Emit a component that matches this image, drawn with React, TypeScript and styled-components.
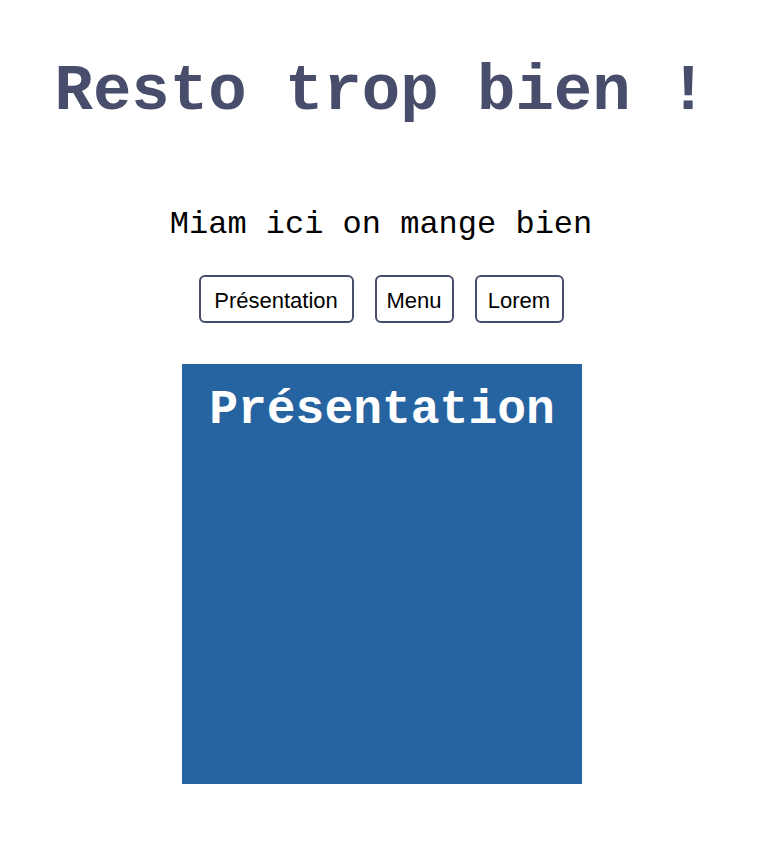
import React from 'react'
import styled, { createGlobalStyle } from 'styled-components'

//Global
const GlobalStyle = createGlobalStyle`
  body {
    margin: 0;
    background: #ffffff;
    font-family: "Liberation Mono", "Courier New", monospace;
  }
`

//Styled Components
const Page = styled.div`
  display: flex;
  flex-direction: column;
  align-items: center;
  padding: 56px 6px 0 0;
`

const Title = styled.h1`
  margin: 0;
  font-family: "Liberation Mono", "Courier New", monospace;
  font-size: 64px;
  line-height: 72px;
  font-weight: 700;
  color: #474d6b;
`

const Tagline = styled.p`
  margin: 77px 0 0;
  font-size: 32px;
  line-height: 40px;
  color: #000;
`

const Nav = styled.nav`
  display: flex;
  gap: 21px;
  margin-top: 30px;
`

const NavButton = styled.button<{ $width: number }>`
  width: ${(props) => props.$width}px;
  height: 48px;
  padding: 3px 0 0;
  border: 2px solid #474d6b;
  border-radius: 6px;
  background: #ffffff;
  color: #000;
  font-family: "Liberation Sans", Arial, sans-serif;
  font-size: 22px;
  text-align: center;
  cursor: pointer;
`

const Panel = styled.section`
  width: 400px;
  height: 420px;
  margin-top: 41px;
  background: #2564a0;
  display: flex;
  flex-direction: column;
  align-items: center;
  transform: translateX(1px);
`

const PanelTitle = styled.h2`
  margin: 18px 0 0;
  font-size: 48px;
  line-height: 56px;
  font-weight: 700;
  color: #ffffff;
`

const sections = [
  { label: 'Présentation', width: 155 },
  { label: 'Menu', width: 79 },
  { label: 'Lorem', width: 89 },
]

//React Component
const App: React.FC = () => {
  return (
    <>
      <GlobalStyle />
      <Page>
        <Title>Resto trop bien !</Title>
        <Tagline>Miam ici on mange bien</Tagline>
        <Nav>
          {sections.map((item) => (
            <NavButton key={item.label} $width={item.width}>
              {item.label}
            </NavButton>
          ))}
        </Nav>
        <Panel>
          <PanelTitle>Présentation</PanelTitle>
        </Panel>
      </Page>
    </>
  )
}

export default App
